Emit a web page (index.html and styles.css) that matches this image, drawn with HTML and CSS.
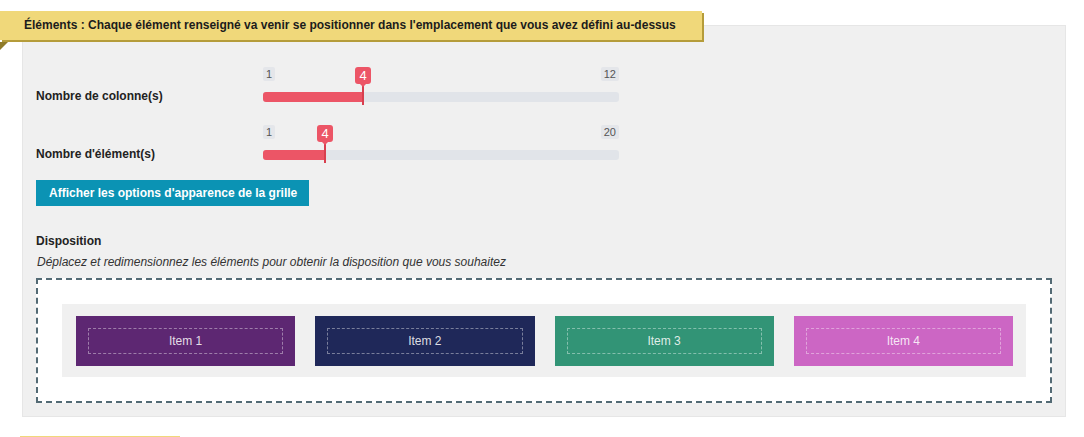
FILE: index.html
```html
<!doctype html>
<html lang="fr">
<head>
    <meta charset="utf-8">
    <title>Éléments</title>
    <link rel="stylesheet" href="styles.css">
</head>
<body>
<div class="page">
    <div class="ribbon">Éléments : Chaque élément renseigné va venir se positionner dans l'emplacement que vous avez défini au-dessus</div>

    <div class="panel">
        <div class="fields">
            <div class="field">
                <label class="field-label">Nombre de colonne(s)</label>
                <div class="slider">
                    <div class="slider-tags">
                        <span class="tag">1</span>
                        <span class="tag">12</span>
                    </div>
                    <div class="track">
                        <div class="fill" style="width: 100px"></div>
                    </div>
                    <div class="handle" style="left: 100px">
                        <span class="bubble">4</span>
                    </div>
                </div>
            </div>

            <div class="field">
                <label class="field-label">Nombre d'élément(s)</label>
                <div class="slider">
                    <div class="slider-tags">
                        <span class="tag">1</span>
                        <span class="tag">20</span>
                    </div>
                    <div class="track">
                        <div class="fill" style="width: 62px"></div>
                    </div>
                    <div class="handle" style="left: 62px">
                        <span class="bubble">4</span>
                    </div>
                </div>
            </div>
        </div>

        <button type="button" class="btn-options">Afficher les options d'apparence de la grille</button>

        <h4 class="section-title">Disposition</h4>
        <p class="hint">Déplacez et redimensionnez les éléments pour obtenir la disposition que vous souhaitez</p>

        <div class="dropzone">
            <div class="grid">
                <div class="item item-1"><span>Item 1</span></div>
                <div class="item item-2"><span>Item 2</span></div>
                <div class="item item-3"><span>Item 3</span></div>
                <div class="item item-4"><span>Item 4</span></div>
            </div>
        </div>
    </div>

    <div class="next-ribbon"></div>
</div>
</body>
</html>
```

FILE: styles.css
```css
body {
    margin: 0;
    background: #ffffff;
    color: #222222;
    font-family: "Liberation Sans", Arial, sans-serif;
    font-size: 12px;
}

.page {
    padding-top: 11px;
}

/* yellow ribbon over the panel */
.ribbon {
    position: relative;
    z-index: 2;
    width: fit-content;
    height: 29px;
    line-height: 29px;
    padding: 0 26px 0 24px;
    background: #f0d87a;
    box-shadow: 2px 2px 0 #b59c3a;
    font-weight: bold;
    color: #1c1c1c;
}

.ribbon::after {
    content: "";
    position: absolute;
    left: 0;
    top: 31px;
    border-top: 8px solid #8f7b2a;
    border-left: 8px solid transparent;
    transform: scaleX(-1);
}

.panel {
    margin: -15px 18px 0 22px;
    padding: 41px 13px 13px 13px;
    background: #f0f0f0;
    border: 1px solid #e6e6e6;
}

.fields {
    display: flex;
    flex-direction: column;
    gap: 23px;
}

.field {
    display: flex;
    align-items: flex-end;
}

.field-label {
    width: 227px;
    font-weight: bold;
    line-height: 11px;
    color: #222222;
}

.slider {
    position: relative;
    width: 356px;
}

.slider-tags {
    display: flex;
    justify-content: space-between;
    margin-bottom: 11px;
}

.tag {
    height: 14px;
    line-height: 14px;
    padding: 0 3px;
    min-width: 6px;
    text-align: center;
    background: #e4e6ea;
    border-radius: 2px;
    font-size: 11px;
    color: #555555;
}

.track {
    height: 10px;
    background: #e1e4e9;
    border-radius: 3px;
    overflow: hidden;
}

.fill {
    height: 100%;
    background: #ec5566;
}

.handle {
    position: absolute;
    top: 0;
    width: 2px;
    height: 38px;
    margin-left: -1px;
    background: #d83f4f;
}

.bubble {
    position: absolute;
    top: 0;
    left: -7px;
    width: 16px;
    height: 17px;
    line-height: 17px;
    text-align: center;
    background: #ec5566;
    border-radius: 3px;
    color: #ffffff;
    font-size: 13px;
}

.bubble::after {
    content: "";
    position: absolute;
    left: 5px;
    bottom: -3px;
    border-top: 3px solid #ec5566;
    border-left: 3px solid transparent;
    border-right: 3px solid transparent;
}

.btn-options {
    display: block;
    margin-top: 20px;
    height: 26px;
    padding: 0 12px 0 13px;
    border: none;
    background: #0b93b4;
    color: #ffffff;
    font-family: inherit;
    font-size: 12px;
    font-weight: bold;
}

.section-title {
    margin: 27px 0 5px 0;
    font-size: 12px;
    line-height: 16px;
    color: #222222;
}

.hint {
    margin: 0 0 8px 1px;
    font-style: italic;
    line-height: 16px;
    color: #333333;
}

.dropzone {
    padding: 24px;
    background: #ffffff;
    border: 2px dashed #536a74;
}

.grid {
    display: grid;
    grid-template-columns: repeat(4, 1fr);
    gap: 20px;
    padding: 12px 13px 11px 14px;
    background: #f0f0f0;
}

.item {
    height: 50px;
    padding: 12px;
    box-sizing: border-box;
    color: rgba(255, 255, 255, 0.85);
}

.item span {
    display: block;
    height: 100%;
    box-sizing: border-box;
    border: 1px dashed rgba(255, 255, 255, 0.4);
    line-height: 24px;
    text-align: center;
}

.item-1 { background: #5d2772; }
.item-2 { background: #1f2859; }
.item-3 { background: #329476; }
.item-4 { background: #cc66c4; }

.next-ribbon {
    margin: 19px 0 0 20px;
    width: 160px;
    height: 30px;
    background: #f0d87a;
}
```
